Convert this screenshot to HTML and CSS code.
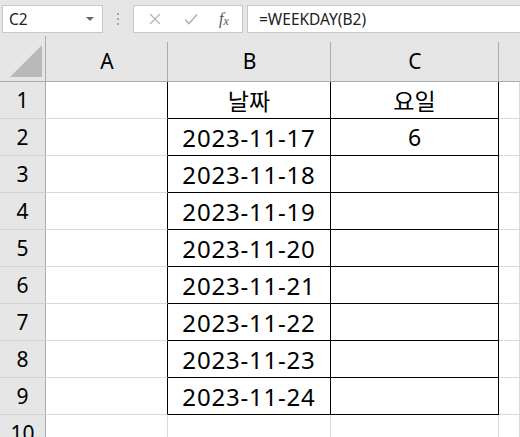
FILE: index.html
```html
<!DOCTYPE html>
<html lang="ko">
<head>
<meta charset="utf-8">
<link rel="stylesheet" href="styles.css">
</head>
<body>
<div class="toolbar">
  <div class="namebox"><span>C2</span><span class="caret"></span></div>
  <div class="dots"><i></i><i></i><i></i></div>
  <div class="fxbox">
    <svg class="ico" width="14" height="14" viewBox="0 0 14 14"><path d="M2 2 L12 12 M12 2 L2 12" stroke="#b3b3b3" stroke-width="1.3" fill="none"/></svg>
    <svg class="ico" width="16" height="14" viewBox="0 0 16 14"><path d="M2 7.5 L6 11.5 L14 2.5" stroke="#b3b3b3" stroke-width="1.6" fill="none"/></svg>
    <span class="fx">f<sub>x</sub></span>
  </div>
  <div class="formula">=WEEKDAY(B2)</div>
</div>
<div class="sheet">
  <div class="corner"><svg width="32" height="32" viewBox="0 0 32 32"><path d="M32 0 L32 32 L0 32 Z" fill="#b9b9b9"/></svg></div>
  <div class="colh">A</div>
  <div class="colh">B</div>
  <div class="colh">C</div>
  <div class="colh last"></div>

  <div class="rowh">1</div><div class="cell edge"></div><div class="cell t">날짜</div><div class="cell t">요일</div><div class="cell"></div>
  <div class="rowh">2</div><div class="cell edge"></div><div class="cell t date">2023-11-17</div><div class="cell t">6</div><div class="cell"></div>
  <div class="rowh">3</div><div class="cell edge"></div><div class="cell t date">2023-11-18</div><div class="cell t"></div><div class="cell"></div>
  <div class="rowh">4</div><div class="cell edge"></div><div class="cell t date">2023-11-19</div><div class="cell t"></div><div class="cell"></div>
  <div class="rowh">5</div><div class="cell edge"></div><div class="cell t date">2023-11-20</div><div class="cell t"></div><div class="cell"></div>
  <div class="rowh">6</div><div class="cell edge"></div><div class="cell t date">2023-11-21</div><div class="cell t"></div><div class="cell"></div>
  <div class="rowh">7</div><div class="cell edge"></div><div class="cell t date">2023-11-22</div><div class="cell t"></div><div class="cell"></div>
  <div class="rowh">8</div><div class="cell edge"></div><div class="cell t date">2023-11-23</div><div class="cell t"></div><div class="cell"></div>
  <div class="rowh">9</div><div class="cell edge"></div><div class="cell t date">2023-11-24</div><div class="cell t"></div><div class="cell"></div>
  <div class="rowh">10</div><div class="cell"></div><div class="cell"></div><div class="cell"></div><div class="cell"></div>
</div>
</body>
</html>
```
FILE: styles.css
```css
* { box-sizing: border-box; }
html, body { margin: 0; padding: 0; }
body {
  width: 520px;
  height: 437px;
  overflow: hidden;
  background: #e6e6e6;
  font-family: "Noto Sans", "Noto Sans CJK KR", sans-serif;
  color: #000;
}
.toolbar {
  height: 36px;
  display: flex;
  align-items: flex-start;
  padding-top: 5px;
  background: #e6e6e6;
}
.namebox {
  margin-left: 2px;
  width: 101px;
  height: 28px;
  background: #fff;
  border: 1px solid #c8c8c8;
  display: flex;
  align-items: center;
  justify-content: space-between;
  padding: 0 8px 0 6px;
  font-size: 15.5px;
  color: #222;
}
.caret {
  width: 0; height: 0;
  border-left: 4px solid transparent;
  border-right: 4px solid transparent;
  border-top: 4px solid #666;
}
.dots {
  width: 30px;
  height: 28px;
  display: flex;
  flex-direction: column;
  align-items: center;
  justify-content: center;
  gap: 3px;
}
.dots i { width: 2px; height: 2px; background: #a6a6a6; display: block; }
.fxbox {
  width: 110px;
  height: 28px;
  background: #fff;
  border: 1px solid #c8c8c8;
  display: flex;
  align-items: center;
  padding-left: 14px;
  gap: 21px;
}
.ico { display: block; }
.fx {
  font-family: "Liberation Serif", serif;
  font-style: italic;
  color: #555;
  font-size: 16px;
  margin-left: -1px;
}
.fx sub { font-size: 12px; vertical-align: -1px; }
.formula {
  margin-left: 4px;
  flex: 1;
  height: 28px;
  background: #fff;
  border: 1px solid #c8c8c8;
  border-right: none;
  padding-left: 11px;
  font-size: 15.5px;
  line-height: 26px;
  color: #222;
}
.sheet {
  display: grid;
  grid-template-columns: 46px 122px 163px 168px 1fr;
  grid-template-rows: 46px repeat(9, 37px) 37px;
  background: #fff;
}
.corner {
  background: #e6e6e6;
  border-right: 1px solid #ababab;
  border-bottom: 1px solid #ababab;
  display: flex;
  align-items: flex-end;
  justify-content: flex-end;
  padding: 0 3px 4px 0;
}
.corner svg { display: block; }
.colh {
  background: linear-gradient(#ababab, #ababab) right bottom / 1px 39px no-repeat, #e6e6e6;
  border-bottom: 1px solid #ababab;
  display: flex;
  align-items: center;
  justify-content: center;
  padding-top: 4px;
  font-size: 21px;
}
.colh.last { background: #e6e6e6; }
.rowh {
  background: #e6e6e6;
  border-right: 1px solid #ababab;
  border-bottom: 1px solid #d4d4d4;
  display: flex;
  align-items: center;
  justify-content: center;
  font-size: 21px;
}
.cell {
  border-right: 1px solid #d9d9d9;
  border-bottom: 1px solid #d9d9d9;
  display: flex;
  align-items: center;
  justify-content: center;
  font-size: 23px;
}
.cell.date { font-size: 24px; letter-spacing: 0.8px; }
.cell.edge { border-right-color: #000; }
.cell.t { border-right-color: #000; border-bottom-color: #000; }
```
